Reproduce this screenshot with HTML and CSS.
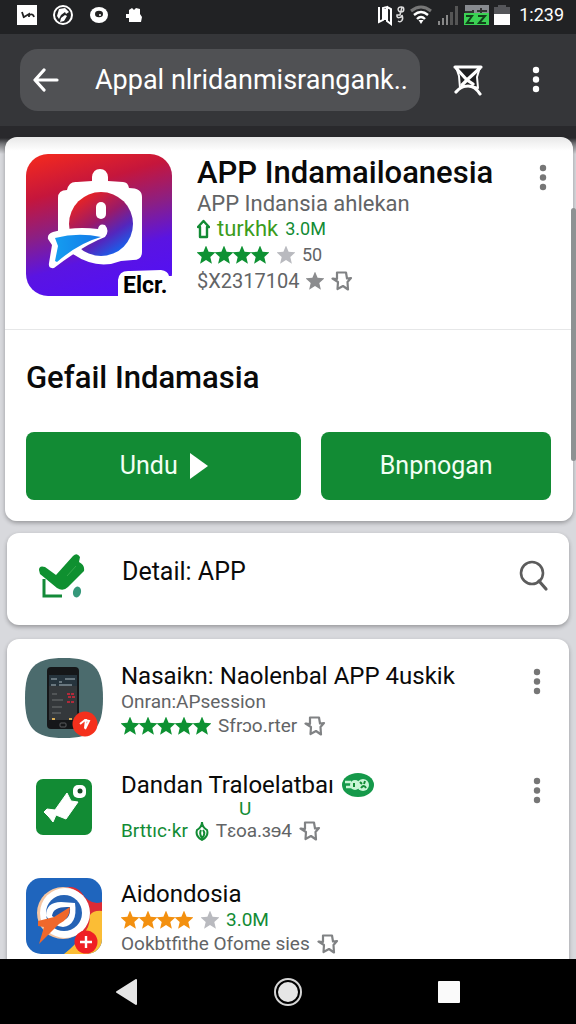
FILE: index.html
```html
<!DOCTYPE html>
<html lang="id">
<head>
  <meta charset="UTF-8" />
  <meta name="viewport" content="width=device-width, initial-scale=1" />
  <title>APP Indamailoanesia</title>
  <link rel="stylesheet" href="styles.css">
</head>
<body>
  <svg class="sprite" aria-hidden="true">
    <symbol id="star" viewBox="1 1 18 18">
      <path d="M10 0.500l2.600 6.300 6.900.600-5.200 4.500 1.600 6.800L10 15l-5.900 3.700 1.600-6.800L.500 7.400l6.900-.600z"/>
    </symbol>
    <symbol id="bookmark" viewBox="0 0 22 22">
      <path d="M6 2.500h9l1 6 4-.5-3.500 4 .5 7.500-5-3.500-5.500 3 .5-7L1.500 8.500 6 9z" fill="none" stroke="currentColor" stroke-width="2.200" stroke-linejoin="round"/>
    </symbol>
    <symbol id="dots" viewBox="0 0 8 32">
      <circle cx="4" cy="6" r="3.200"/><circle cx="4" cy="15.500" r="3.200"/><circle cx="4" cy="25" r="3.200"/>
    </symbol>
  </svg>

  <header>
    <div class="status-bar">
      <div class="status-left">
        <svg width="20" height="20" viewBox="0 0 20 20" aria-hidden="true">
          <path fill="#fff" d="M0 0h20v20H0z"/>
          <path d="M5 7l2 6M7 12l5-3v3M12 10q4-2 5 2" fill="none" stroke="#222" stroke-width="1.800"/>
        </svg>
        <svg width="20" height="20" viewBox="0 0 20 20" aria-hidden="true">
          <circle cx="10" cy="10" r="9" fill="none" stroke="#fff" stroke-width="2"/>
          <path fill="#fff" d="M6 4l6-1 4 4-3 2-1-2-4 3-2 4-2-3zM8 13l4-3 2 1-3 5-4 1z"/>
        </svg>
        <svg width="20" height="20" viewBox="0 0 20 20" aria-hidden="true">
          <ellipse cx="10" cy="10" rx="9" ry="8" fill="#fff"/>
          <ellipse cx="10" cy="9" rx="4" ry="3.200" fill="#222"/>
          <circle cx="11" cy="10" r="1" fill="#fff"/>
        </svg>
        <svg width="18" height="20" viewBox="0 0 18 20" aria-hidden="true">
          <path fill="#fff" d="M4 17v-4H1V9h3V5l3-2 2 2 2-2 4 1v5l2 3-1 5z"/>
        </svg>
      </div>
      <div class="status-right">
        <svg width="27" height="22" viewBox="0 0 27 22" aria-hidden="true">
          <path d="M1 3v15l4-2V4l4-1v14l4 3V5L9 3" fill="none" stroke="#fff" stroke-width="2"/>
          <path d="M7 5v11" stroke="#fff" stroke-width="2"/>
          <path d="M24 3c-5-1-5 5-1 5s3-5 1-5l-2 8h-3c-1 4 5 3 5 0 2 5-1 8-4 6" fill="none" stroke="#ddd" stroke-width="1.500"/>
        </svg>
        <svg width="22" height="20" viewBox="0 0 22 20" aria-hidden="true">
          <path d="M1 6q10-8 20 0" fill="none" stroke="#777" stroke-width="3"/>
          <path d="M4 10q7-6 14 0M7 14q4-4 8 0" fill="none" stroke="#fff" stroke-width="2.400"/>
          <path d="M8.500 15h5L11 19z" fill="#fff"/>
        </svg>
        <svg width="22" height="20" viewBox="0 0 22 20" aria-hidden="true">
          <path d="M1 20v-4h2v4zM5 20v-7h2v7zM9 20v-10h2v10z" fill="#888"/>
          <path d="M13 20V7h3v13zM18 20V1h3v19z" fill="#555"/>
        </svg>
        <svg width="25" height="20" viewBox="0 0 25 20" aria-hidden="true">
          <path d="M1 0h24v8H1z" fill="#888b90"/>
          <path d="M9 5v3M17 3v5M1 7h8M13 6h10" stroke="#333" stroke-width="2"/>
          <path d="M0 8h25v12H0z" fill="#3bd153"/>
          <path d="M2 11h6l-5 7h7M14 11h7l-6 7h7" fill="none" stroke="#12401a" stroke-width="2"/>
        </svg>
        <svg width="16" height="20" viewBox="0 0 16 20" aria-hidden="true">
          <path d="M4 0h8v2h4v8H0V2h4z" fill="#55565a"/>
          <path d="M0 9h16v11H0z" fill="#fff"/>
        </svg>
        <span class="clock">1:239</span>
      </div>
    </div>

    <div class="toolbar">
      <div class="search-box">
        <button class="icon-btn" type="button" aria-label="Kembali">
          <svg width="28" height="24" viewBox="0 0 28 24" aria-hidden="true">
            <path d="M12 2L3 12l9 10M4 12h21" fill="none" stroke="#fff" stroke-width="3.200" stroke-linecap="round" stroke-linejoin="round"/>
          </svg>
        </button>
        <input class="search-input" type="text" aria-label="Telusuri" value="Appal nlridanmisrangank..">
      </div>
      <button class="icon-btn" type="button" aria-label="Pindai">
        <svg width="32" height="32" viewBox="0 0 32 32" aria-hidden="true">
          <path d="M4 3h24l-3 10 1 11q-10-4-18 0L7 12z" fill="#1f2022" stroke="#fff" stroke-width="2" stroke-linejoin="round"/>
          <path d="M3 3h26M4 4l11 12L28 4M15 16l-5 5M15 16l6 4M4 28q5-6 12-6t12 8" fill="none" stroke="#fff" stroke-width="3.200" stroke-linecap="round"/>
        </svg>
      </button>
      <button class="icon-btn toolbar-more" type="button" aria-label="Menu">
        <svg width="8" height="32" aria-hidden="true"><use href="#dots"/></svg>
      </button>
    </div>
  </header>

  <main>
    <section class="card hero">
      <div class="hero-top">
        <svg class="hero-icon" viewBox="0 0 146 142" role="img" aria-label="Elcr">
          <defs>
            <linearGradient id="heroBg" x1="0.200" y1="0" x2="0.500" y2="1">
              <stop offset="0" stop-color="#ee2722"/>
              <stop offset="0.250" stop-color="#c5163c"/>
              <stop offset="0.500" stop-color="#8c1f83"/>
              <stop offset="0.750" stop-color="#5a14e2"/>
              <stop offset="1" stop-color="#5410f2"/>
            </linearGradient>
            <linearGradient id="dial" x1="0.150" y1="0.150" x2="0.700" y2="1">
              <stop offset="0" stop-color="#e32228"/>
              <stop offset="0.400" stop-color="#9a1a68"/>
              <stop offset="0.700" stop-color="#5426bd"/>
              <stop offset="1" stop-color="#1464ee"/>
            </linearGradient>
            <linearGradient id="flag" x1="0" y1="0" x2="1" y2="0">
              <stop offset="0" stop-color="#149df0"/>
              <stop offset="1" stop-color="#1477e8"/>
            </linearGradient>
          </defs>
          <rect width="146" height="142" rx="22" fill="url(#heroBg)"/>
          <path d="M32 80V44Q32 36 41 36Q43 27 51 28L66 27V23Q67 15 74 15T82 23V27L97 28Q102 28 103 34Q116 34 116 43V98Q116 106 107 106L95 107Q70 117 44 98z" fill="#fff"/>
          <circle cx="75" cy="70" r="32" fill="url(#dial)"/>
          <rect x="70" y="48" width="10" height="17" rx="5" fill="#fff"/>
          <path d="M27 78Q48 72 72 75Q73 69 79 71Q84 77 79 83Q58 91 28 114Q22 115 23 109L26 91L22 85Q21 80 27 78z" fill="#fff"/>
          <path d="M29 84Q52 78 75 83Q53 89 31 108L29 107L32 92z" fill="url(#flag)"/>
          <path d="M92 142V126Q93 116 104 117L135 116Q142 117 143 122H147V143H92z" fill="#fff"/>
          <text class="hero-icon-text" x="97" y="139">Elcr.</text>
        </svg>
        <div class="hero-info">
          <h1>APP Indamailoanesia</h1>
          <p class="publisher">APP Indansia ahlekan</p>
          <p class="line green">
            <svg width="13" height="20" viewBox="0 0 13 20" aria-hidden="true">
              <path d="M6.500 2L12 8H10v10H3V8H1z" fill="none" stroke="currentColor" stroke-width="2.400" stroke-linejoin="round"/>
            </svg>
            <span class="installs">turkhk</span> <span class="count">3.0M</span>
          </p>
          <p class="line">
            <span class="stars" role="img" aria-label="4 dari 5">
              <svg><use href="#star"/></svg><svg><use href="#star"/></svg><svg><use href="#star"/></svg><svg><use href="#star"/></svg><svg class="off"><use href="#star"/></svg>
            </span>
            <span class="count">50</span>
          </p>
          <p class="line">
            <span class="price">$X2317104</span>
            <svg class="star-grey"><use href="#star"/></svg>
            <svg class="mark"><use href="#bookmark"/></svg>
          </p>
        </div>
        <button class="icon-btn more" type="button" aria-label="Opsi">
          <svg width="8" height="32" aria-hidden="true"><use href="#dots"/></svg>
        </button>
      </div>
      <div class="hero-bottom">
        <h2>Gefail Indamasia</h2>
        <div class="actions">
          <button class="btn btn-wide" type="button">Undu
            <svg width="18" height="26" viewBox="0 0 18 26" aria-hidden="true"><path d="M0 0l18 13L0 26z" fill="#fff"/></svg>
          </button>
          <button class="btn" type="button">Bnpnogan</button>
        </div>
      </div>
    </section>

    <section class="card detail">
      <svg width="48" height="46" viewBox="0 0 48 46" aria-hidden="true">
        <path d="M6 26v17h18" fill="none" stroke="#138a38" stroke-width="3"/>
        <path d="M1 17Q1 12 7 14L18 22L35 3Q39-1 42 4L41 9Q47 12 46 18L30 34Q25 39 19 35L2 21z" fill="#0f9030"/>
        <path d="M38 13L29 23" stroke="#36a84d" stroke-width="1"/>
        <ellipse cx="39" cy="39" rx="4" ry="5.500" transform="rotate(15 39 39)" fill="#35987a"/>
      </svg>
      <h3>Detail: APP</h3>
      <button class="icon-btn" type="button" aria-label="Cari">
        <svg width="30" height="32" viewBox="0 0 30 32" aria-hidden="true">
          <circle cx="13" cy="13" r="11" fill="none" stroke="#5c5c5c" stroke-width="2.600"/>
          <path d="M20 21l7 8" stroke="#5c5c5c" stroke-width="3.200" stroke-linecap="round"/>
        </svg>
      </button>
    </section>

    <section class="card list">
      <article class="app">
        <div class="app-icon">
          <svg width="78" height="80" viewBox="0 0 78 80" aria-hidden="true">
            <path d="M39 0c30 0 39 10 39 40S69 80 39 80 0 70 0 40 9 0 39 0z" fill="#4b6b6d"/>
            <rect x="22" y="9" width="32" height="62" rx="4" fill="#151719"/>
            <path d="M24 17h28v11H24z" fill="#26343d"/>
            <path d="M24 28h28v34H24z" fill="#34383b"/>
            <path d="M26 21h6M40 21h10M26 27h5M34 27h13M34 24h3" stroke="#a9b8c0" stroke-width="1"/>
            <path d="M27 36h5M27 42h11M27 49h10M27 55h9" stroke="#6f7375" stroke-width="1"/>
            <path d="M42 36h8M43 39h7M42 44h8" stroke="#b22a3a" stroke-width="2" stroke-dasharray="3 1"/>
            <path d="M27 61h3M44 61h3" stroke="#d7ac55" stroke-width="2"/>
            <rect x="35" y="65" width="6" height="4" rx="1" fill="none" stroke="#5b5d5f"/>
            <circle cx="60" cy="66" r="12.500" fill="#f5301c"/>
            <path d="M55 66l5-4 4 1-4 8M61 61l-1 9" fill="none" stroke="#fff" stroke-width="2"/>
          </svg>
        </div>
        <div class="app-info">
          <h3>Nasaikn: Naolenbal APP 4uskik</h3>
          <p class="line">Onran:APsession</p>
          <p class="line">
            <span class="stars" role="img" aria-label="5 dari 5">
              <svg><use href="#star"/></svg><svg><use href="#star"/></svg><svg><use href="#star"/></svg><svg><use href="#star"/></svg><svg><use href="#star"/></svg>
            </span>
            <span>Sfrɔo.rter</span>
            <svg class="mark"><use href="#bookmark"/></svg>
          </p>
        </div>
        <button class="icon-btn more" type="button" aria-label="Opsi">
          <svg width="8" height="32" aria-hidden="true"><use href="#dots"/></svg>
        </button>
      </article>

      <article class="app">
        <div class="app-icon">
          <svg width="56" height="56" viewBox="0 0 56 56" aria-hidden="true">
            <rect width="56" height="56" rx="7" fill="#128b34"/>
            <path d="M8 33L11 30L19 31L31 14L35 22L42 23L30 40L20 36L17 43L13 38z" fill="#fff" stroke="#fff" stroke-linejoin="round"/>
            <rect x="37" y="6" width="13" height="13" rx="5" fill="#fff"/>
            <circle cx="44" cy="12" r="2.500" fill="#174a26"/>
          </svg>
        </div>
        <div class="app-info">
          <h3>Dandan Traloelatbaı
            <svg width="32" height="24" viewBox="0 0 32 24" aria-hidden="true">
              <ellipse cx="16" cy="12" rx="16" ry="12" fill="#15994a"/>
              <path d="M3 9h6M4 14h5" stroke="#c9f5d6" stroke-width="2.500"/>
              <circle cx="13" cy="12" r="5" fill="#c9f5d6"/>
              <circle cx="21" cy="12" r="6" fill="#c9f5d6"/>
              <path d="M12 10v4M18 9l2 2M23 8l-1 3M19 15q3-4 5 0" stroke="#128b34" stroke-width="2" fill="none"/>
            </svg>
          </h3>
          <p class="line green note">U</p>
          <p class="line">
            <span class="green">Brttıc·kr</span>
            <svg class="green" width="14" height="20" viewBox="0 0 14 20" aria-hidden="true">
              <path d="M7 1q0 5 5 8 2 6-5 10-7-4-5-10 5-3 5-8zM6 9q-2 4 1 8 4-4 1-8" fill="none" stroke="currentColor" stroke-width="2"/>
            </svg>
            <span>Tɛoa.ɜɘ4</span>
            <svg class="mark"><use href="#bookmark"/></svg>
          </p>
        </div>
        <button class="icon-btn more" type="button" aria-label="Opsi">
          <svg width="8" height="32" aria-hidden="true"><use href="#dots"/></svg>
        </button>
      </article>

      <article class="app">
        <div class="app-icon">
          <svg width="76" height="76" viewBox="0 0 76 76" aria-hidden="true">
            <defs><clipPath id="tile"><rect width="76" height="76" rx="15"/></clipPath></defs>
            <g clip-path="url(#tile)">
              <path d="M0 0h76v76H0z" fill="#1f65bd"/>
              <path d="M38 76q24-18 24-43l14-1v44z" fill="#fbbd35"/>
              <path d="M39 10q9-3 16 4 9 14 21 10v9q-8-1-12 4 0 14-8 20V28z" fill="#dd2b35"/>
              <circle cx="37" cy="35" r="26" fill="#f4c5a2"/>
              <circle cx="39" cy="35" r="25" fill="#fff"/>
              <circle cx="38" cy="35" r="18" fill="#2563b5"/>
              <path d="M20 38Q20 24 35 24L49 25Q52 47 37 49Q28 49 20 38z" fill="#fff"/>
              <path d="M26 38Q27 28 44 29Q45 42 34 43z" fill="#2257a8"/>
              <path d="M12 43l16-4 16-10q0 12-11 17L13 66l5-17-6-1z" fill="#f0682b"/>
            </g>
            <circle cx="60" cy="64" r="11.500" fill="#ef1f24"/>
            <path d="M54 64h12M60 58v12" stroke="#fff" stroke-width="2.400"/>
          </svg>
        </div>
        <div class="app-info">
          <h3>Aidondosia</h3>
          <p class="line">
            <span class="stars orange" role="img" aria-label="4 dari 5">
              <svg><use href="#star"/></svg><svg><use href="#star"/></svg><svg><use href="#star"/></svg><svg><use href="#star"/></svg><svg class="off"><use href="#star"/></svg>
            </span>
            <span class="green">3.0M</span>
          </p>
          <p class="line">
            <span>Ookbtfithe Ofome sies</span>
            <svg class="mark"><use href="#bookmark"/></svg>
          </p>
        </div>
      </article>
    </section>
    <div class="scroll-thumb"></div>
  </main>

  <nav class="nav-bar" aria-label="Navigasi sistem">
    <button class="icon-btn" type="button" aria-label="Kembali">
      <svg width="22" height="26" viewBox="0 0 22 26" aria-hidden="true"><path d="M20 1v24L1 13z" fill="#e6e6e6" stroke="#e6e6e6" stroke-width="2" stroke-linejoin="round"/></svg>
    </button>
    <button class="icon-btn" type="button" aria-label="Beranda">
      <svg width="30" height="30" viewBox="0 0 30 30" aria-hidden="true"><circle cx="15" cy="15" r="13" fill="none" stroke="#d5d5d5" stroke-width="2"/><circle cx="15" cy="15" r="10" fill="#e6e6e6"/></svg>
    </button>
    <button class="icon-btn" type="button" aria-label="Terbaru">
      <svg width="22" height="22" viewBox="0 0 22 22" aria-hidden="true"><rect width="22" height="22" rx="1" fill="#fafafa"/></svg>
    </button>
  </nav>
</body>
</html>
```

FILE: styles.css
```css
:root {
  --green: #128b34;
  --text: #0a0a0a;
  --text-secondary: #626466;
  --page: #d8d9dd;
  --radius: 12px;
}

* {
  box-sizing: border-box;
}

body {
  margin: 0;
  height: 100vh;
  display: flex;
  flex-direction: column;
  overflow: hidden;
  background: var(--page);
  color: var(--text);
  font-family: Roboto, "Liberation Sans", sans-serif;
}

h1, h2, h3, p {
  margin: 0;
}

svg {
  display: block;
  flex: none;
}

.sprite {
  position: absolute;
  width: 0;
  height: 0;
}

.icon-btn {
  display: flex;
  padding: 0;
  border: 0;
  background: none;
  color: inherit;
  fill: currentColor;
  cursor: pointer;
}

.green {
  color: var(--green);
}

/* Status bar */
.status-bar {
  display: flex;
  justify-content: space-between;
  align-items: center;
  height: 34px;
  padding: 0 12px 4px 17px;
  background: #212224;
}

.status-left {
  display: flex;
  gap: 16px;
}

.status-right {
  display: flex;
  align-items: center;
  gap: 5px;
}

.clock {
  margin-left: 4px;
  color: #fff;
  font-size: 18px;
  line-height: 24px;
}

/* Toolbar */
.toolbar {
  display: flex;
  align-items: center;
  height: 92px;
  padding: 0 36px 0 20px;
  background: #353639;
  color: #fff;
}

.search-box {
  flex: 1;
  min-width: 0;
  display: flex;
  align-items: center;
  gap: 35px;
  height: 62px;
  margin-right: 32px;
  padding-left: 12px;
  border-radius: 18px;
  background: #505154;
}

.search-input {
  flex: 1;
  min-width: 0;
  padding: 0;
  border: 0;
  outline: 0;
  background: none;
  color: #fff;
  font: 27px/36px Roboto, "Liberation Sans", sans-serif;
}

.toolbar-more {
  margin-left: 48px;
}

/* Content */
main {
  position: relative;
  flex: 1;
  min-height: 0;
  overflow: hidden;
  padding: 11px 7px 0;
  background: linear-gradient(#29292c 12px, #77787b 18px, var(--page) 28px);
}

.card {
  border-radius: var(--radius);
  background: #fff;
  box-shadow: 0 2px 4px rgba(0, 0, 0, 0.3);
}

.hero {
  margin: 0 -4px 12px -2px;
  background: linear-gradient(#e8e8e8, #fff 14px);
}

.hero-top {
  display: flex;
  gap: 25px;
  height: 193px;
  padding: 17px 26px 0 21px;
  border-bottom: 1px solid #e6e7e8;
}

.hero-icon {
  width: 146px;
  height: 142px;
  overflow: visible;
}

.hero-icon-text {
  font: 700 23px Roboto, "Liberation Sans", sans-serif;
}

.hero-info {
  flex: 1;
  min-width: 0;
  padding-top: 1px;
  white-space: nowrap;
}

h1 {
  font-size: 31px;
  line-height: 36px;
  font-weight: 500;
}

.publisher {
  font-size: 22px;
  line-height: 25px;
  color: var(--text-secondary);
}

.line {
  display: flex;
  align-items: center;
  gap: 7px;
  font-size: 19px;
  line-height: 26px;
  color: var(--text-secondary);
}

.line.green {
  color: var(--green);
}

.installs {
  font-size: 22px;
  color: #3c9c1c;
}

.count {
  font-size: 18px;
}

.price {
  font-size: 20px;
}

.stars {
  display: flex;
  color: #0d9132;
  fill: currentColor;
}

.stars svg {
  width: 18px;
  height: 18px;
}

.stars .off {
  margin-left: 8px;
  fill: #b9babf;
}

.stars.orange {
  color: #f3900f;
}

.star-grey {
  width: 18px;
  height: 18px;
  fill: #8b8c8e;
}

.mark {
  width: 22px;
  height: 22px;
  color: #808284;
}

.more {
  align-items: flex-start;
  padding-top: 8px;
  color: #767676;
}

.hero-bottom {
  padding: 28px 22px 21px 21px;
}

h2 {
  font-size: 31px;
  line-height: 40px;
  font-weight: 500;
}

.actions {
  display: flex;
  gap: 20px;
  margin-top: 34px;
}

.btn {
  flex: 5;
  display: flex;
  align-items: center;
  justify-content: center;
  gap: 12px;
  height: 68px;
  padding: 0;
  border: 0;
  border-radius: 8px;
  background: var(--green);
  color: #f2fff4;
  font: 25px/32px Roboto, "Liberation Sans", sans-serif;
  cursor: pointer;
}

.btn-wide {
  flex: 6;
}

.detail {
  display: flex;
  align-items: center;
  height: 92px;
  margin-bottom: 14px;
  padding: 0 20px 6px 31px;
}

h3 {
  font-size: 24px;
  line-height: 28px;
  font-weight: 400;
  white-space: nowrap;
}

.detail h3 {
  flex: 1;
  margin: 0 0 8px 36px;
  font-size: 25px;
}

.list {
  padding: 19px 28px 24px 18px;
}

.app {
  display: flex;
  gap: 18px;
  min-height: 109px;
}

.app-icon {
  display: flex;
  justify-content: center;
  align-items: center;
  width: 78px;
  height: 80px;
}

.app-info {
  flex: 1;
  min-width: 0;
  padding-top: 4px;
  white-space: nowrap;
}

.app .line {
  line-height: 24px;
}

.app h3 {
  display: flex;
  align-items: center;
  gap: 8px;
}

.app .note {
  padding-left: 118px;
  line-height: 20px;
}

.scroll-thumb {
  position: absolute;
  top: 82px;
  right: 0;
  width: 5px;
  height: 253px;
  border-radius: 4px;
  background: #8e9293;
}

/* System navigation */
.nav-bar {
  display: flex;
  justify-content: space-around;
  align-items: center;
  height: 65px;
  padding: 0 48px;
  background: #000;
}
```
